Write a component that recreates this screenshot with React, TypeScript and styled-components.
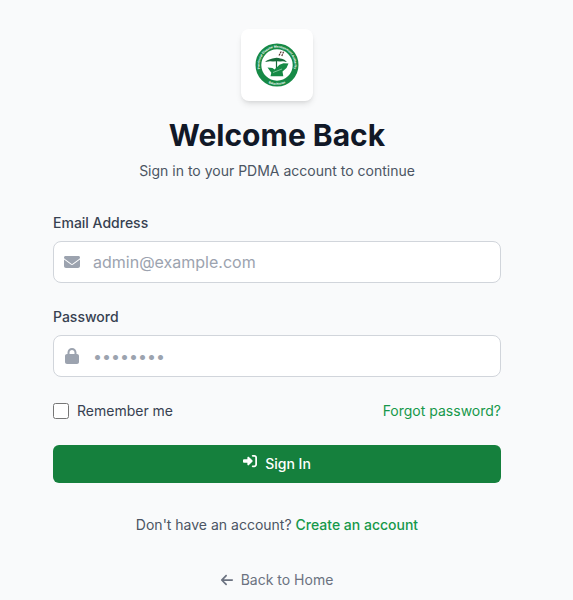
import React from "react";
import styled, { createGlobalStyle } from "styled-components";
import { FaArrowLeft, FaEnvelope, FaLock, FaRightToBracket } from "react-icons/fa6";

const GlobalStyle = createGlobalStyle`
  *, *::before, *::after { box-sizing: border-box; }
  body {
    margin: 0;
    background: #f9fafb;
    font-family: Inter, "Liberation Sans", sans-serif;
    font-size: 14px;
    line-height: 20px;
    color: #4b5563;
  }
`;

const Page = styled.main`
  display: flex;
  justify-content: center;
  padding: 29px 35px 10px 16px;
`;

const Panel = styled.div`
  width: 100%;
  max-width: 448px;
`;

const Header = styled.header`
  display: flex;
  flex-direction: column;
  align-items: center;
  text-align: center;
`;

const LogoCard = styled.div`
  display: flex;
  padding: 12px;
  margin-bottom: 16px;
  background: #ffffff;
  border-radius: 8px;
  box-shadow: 0 4px 6px -1px rgba(0, 0, 0, 0.1), 0 2px 4px -2px rgba(0, 0, 0, 0.1);
`;

const Title = styled.h1`
  margin: 0 0 8px;
  font-size: 30px;
  line-height: 36px;
  font-weight: 700;
  color: #111827;
`;

const Text = styled.p`
  margin: 0;
`;

const Form = styled.form`
  display: flex;
  flex-direction: column;
  gap: 24px;
  margin-top: 32px;
`;

const Field = styled.div`
  display: flex;
  flex-direction: column;
  gap: 8px;
`;

const Label = styled.label`
  font-weight: 500;
  color: #374151;
`;

const InputBox = styled.div`
  display: flex;
  align-items: center;
  gap: 13px;
  padding-left: 10px;
  background: #ffffff;
  border: 1px solid #d1d5db;
  border-radius: 8px;
  color: #9ca3af;

  svg {
    flex: none;
    width: 16px;
    height: 16px;
  }

  &:focus-within {
    border-color: #15803d;
  }
`;

const Input = styled.input`
  flex: 1;
  min-width: 0;
  height: 40px;
  padding: 0 12px 0 0;
  border: 0;
  outline: 0;
  background: transparent;
  font: inherit;
  font-size: 16px;
  color: #111827;

  &::placeholder {
    color: #9ca3af;
    opacity: 1;
  }
`;

const Options = styled.div`
  display: flex;
  align-items: center;
  justify-content: space-between;
`;

const Remember = styled.label`
  display: flex;
  align-items: center;
  gap: 8px;
  color: #374151;
`;

const Checkbox = styled.input`
  width: 16px;
  height: 16px;
  margin: 0;
  accent-color: #15803d;
`;

const Link = styled.a<{ $strong?: boolean }>`
  color: #16984a;
  font-weight: ${({ $strong }) => ($strong ? 500 : 400)};
  text-decoration: none;
`;

const SubmitButton = styled.button`
  display: flex;
  align-items: flex-start;
  justify-content: center;
  gap: 8px;
  padding: 9px 16px;
  border: 0;
  border-radius: 6px;
  background: #15803d;
  color: #ffffff;
  font: inherit;
  font-weight: 500;
  cursor: pointer;
`;

const Footer = styled.footer`
  display: flex;
  flex-direction: column;
  align-items: center;
  gap: 35px;
  margin-top: 32px;
`;

const BackLink = styled.a`
  display: flex;
  align-items: center;
  gap: 7px;
  padding-right: 1px;
  color: #6b7280;
  text-decoration: none;
`;

const Logo = () => (
  <svg width="48" height="48" viewBox="0 0 48 48" role="img" aria-label="Provincial Disaster Management Authority">
    <defs>
      <path id="upperArc" d="M10.700 35.200A17.400 17.400 0 1 1 37.300 35.200" />
      <path id="lowerArc" d="M11.800 39.600A19.800 19.800 0 0 0 36.200 39.600" />
    </defs>
    <circle cx="24" cy="24" r="18.6" fill="none" stroke="#168a46" strokeWidth="5.8" />
    <g fill="#ffffff" fontFamily="Inter, sans-serif" fontWeight="700" fontSize="3">
      <text>
        <textPath href="#upperArc" startOffset="50%" textAnchor="middle">
          Provincial Disaster Management Authority
        </textPath>
      </text>
      <text>
        <textPath href="#lowerArc" startOffset="50%" textAnchor="middle">
          Balochistan
        </textPath>
      </text>
    </g>
    <path d="M12 21c2-2 5.500-3.200 11.500-4.200 6 .8 8.500 2 10.500 4.200l-4-.8-3 .4-3-.4-4 .4-3-.4z" fill="#176b3a" />
    <path d="M23.500 19v10" stroke="#176b3a" strokeWidth="1.200" />
    <path d="M14.500 26.500l5 .6 2 1.500 5-4.800 4-1.500 5 .2-2 4.500-4 3.500.8 4.800H17.500l.8-3.500z" fill="#168a46" />
    <path d="M20 31.500l9-3.500" stroke="#7ac297" strokeWidth="1" />
    <path d="M26 14.500l2.200-4M28.800 15l1.800-4.400" stroke="#5b3431" strokeWidth="1.200" strokeDasharray="2 .6" />
  </svg>
);

export default function App() {
  return (
    <>
      <GlobalStyle />
      <Page>
        <Panel>
          <Header>
            <LogoCard>
              <Logo />
            </LogoCard>
            <Title>Welcome Back</Title>
            <Text>Sign in to your PDMA account to continue</Text>
          </Header>
          <Form onSubmit={(event: React.FormEvent) => event.preventDefault()}>
            <Field>
              <Label htmlFor="email">Email Address</Label>
              <InputBox>
                <FaEnvelope aria-hidden />
                <Input id="email" type="email" placeholder="admin@example.com" autoComplete="email" />
              </InputBox>
            </Field>
            <Field>
              <Label htmlFor="password">Password</Label>
              <InputBox>
                <FaLock aria-hidden />
                <Input id="password" type="password" placeholder="••••••••" autoComplete="current-password" />
              </InputBox>
            </Field>
            <Options>
              <Remember htmlFor="remember">
                <Checkbox id="remember" type="checkbox" />
                Remember me
              </Remember>
              <Link href="#forgot-password">Forgot password?</Link>
            </Options>
            <SubmitButton type="submit">
              <FaRightToBracket size={14} aria-hidden />
              Sign In
            </SubmitButton>
          </Form>
          <Footer>
            <Text>
              Don't have an account?{" "}
              <Link href="#register" $strong>
                Create an account
              </Link>
            </Text>
            <BackLink href="#home">
              <FaArrowLeft size={14} aria-hidden />
              Back to Home
            </BackLink>
          </Footer>
        </Panel>
      </Page>
    </>
  );
}
